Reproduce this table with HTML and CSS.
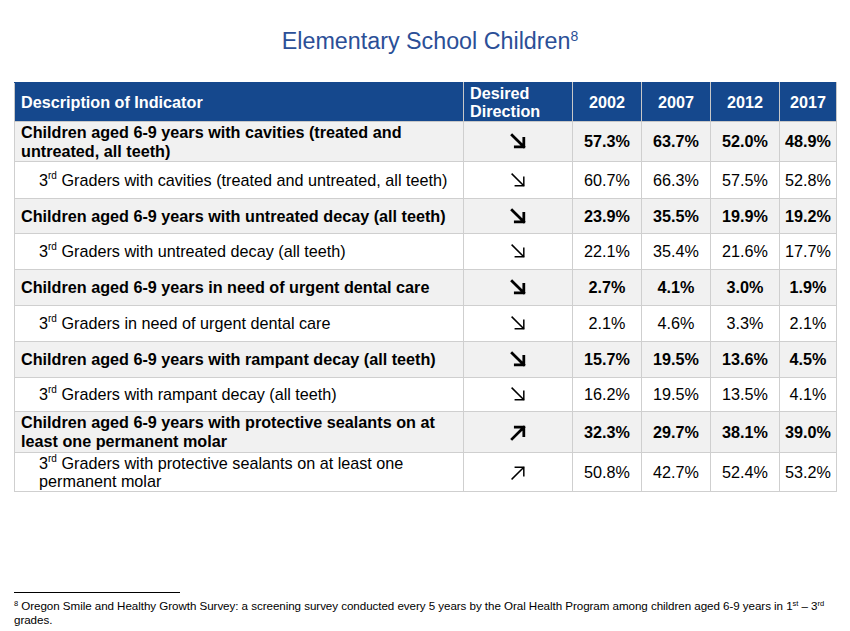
FILE: index.html
```html
<!DOCTYPE html>
<html>
<head>
<meta charset="utf-8">
<link rel="stylesheet" href="styles.css">
</head>
<body>
<h1 class="title">Elementary School Children<sup>8</sup></h1>
<table class="data">
  <colgroup>
    <col class="c-desc"><col class="c-dir"><col class="c-yr"><col class="c-yr"><col class="c-yr"><col class="c-yr-last">
  </colgroup>
  <thead>
    <tr>
      <th class="desc">Description of Indicator</th>
      <th class="dir">Desired<br>Direction</th>
      <th>2002</th><th>2007</th><th>2012</th><th>2017</th>
    </tr>
  </thead>
  <tbody>
    <tr class="main h40">
      <td class="desc">Children aged 6-9 years with cavities (treated and untreated, all teeth)</td>
      <td class="arrow"><svg class="ar" viewBox="0 0 16 16"><path d="M2 2 L13 13 M13 5 V13 H5"/></svg></td>
      <td>57.3%</td><td>63.7%</td><td>52.0%</td><td>48.9%</td>
    </tr>
    <tr class="sub h37">
      <td class="desc">3<sup>rd</sup> Graders with cavities (treated and untreated, all teeth)</td>
      <td class="arrow"><svg class="ar" viewBox="0 0 16 16"><path d="M2 2 L13 13 M13 5 V13 H5"/></svg></td>
      <td>60.7%</td><td>66.3%</td><td>57.5%</td><td>52.8%</td>
    </tr>
    <tr class="main h35">
      <td class="desc">Children aged 6-9 years with untreated decay (all teeth)</td>
      <td class="arrow"><svg class="ar" viewBox="0 0 16 16"><path d="M2 2 L13 13 M13 5 V13 H5"/></svg></td>
      <td>23.9%</td><td>35.5%</td><td>19.9%</td><td>19.2%</td>
    </tr>
    <tr class="sub h36">
      <td class="desc">3<sup>rd</sup> Graders with untreated decay (all teeth)</td>
      <td class="arrow"><svg class="ar" viewBox="0 0 16 16"><path d="M2 2 L13 13 M13 5 V13 H5"/></svg></td>
      <td>22.1%</td><td>35.4%</td><td>21.6%</td><td>17.7%</td>
    </tr>
    <tr class="main h36">
      <td class="desc">Children aged 6-9 years in need of urgent dental care</td>
      <td class="arrow"><svg class="ar" viewBox="0 0 16 16"><path d="M2 2 L13 13 M13 5 V13 H5"/></svg></td>
      <td>2.7%</td><td>4.1%</td><td>3.0%</td><td>1.9%</td>
    </tr>
    <tr class="sub h36">
      <td class="desc">3<sup>rd</sup> Graders in need of urgent dental care</td>
      <td class="arrow"><svg class="ar" viewBox="0 0 16 16"><path d="M2 2 L13 13 M13 5 V13 H5"/></svg></td>
      <td>2.1%</td><td>4.6%</td><td>3.3%</td><td>2.1%</td>
    </tr>
    <tr class="main h36">
      <td class="desc">Children aged 6-9 years with rampant decay (all teeth)</td>
      <td class="arrow"><svg class="ar" viewBox="0 0 16 16"><path d="M2 2 L13 13 M13 5 V13 H5"/></svg></td>
      <td>15.7%</td><td>19.5%</td><td>13.6%</td><td>4.5%</td>
    </tr>
    <tr class="sub h34">
      <td class="desc">3<sup>rd</sup> Graders with rampant decay (all teeth)</td>
      <td class="arrow"><svg class="ar" viewBox="0 0 16 16"><path d="M2 2 L13 13 M13 5 V13 H5"/></svg></td>
      <td>16.2%</td><td>19.5%</td><td>13.5%</td><td>4.1%</td>
    </tr>
    <tr class="main h41">
      <td class="desc">Children aged 6-9 years with protective sealants on at least one permanent molar</td>
      <td class="arrow"><svg class="ar" viewBox="0 0 16 16"><path d="M2 14 L13 3 M5 3 H13 V11"/></svg></td>
      <td>32.3%</td><td>29.7%</td><td>38.1%</td><td>39.0%</td>
    </tr>
    <tr class="sub h39">
      <td class="desc">3<sup>rd</sup> Graders with protective sealants on at least one permanent molar</td>
      <td class="arrow"><svg class="ar" viewBox="0 0 16 16"><path d="M2 14 L13 3 M5 3 H13 V11"/></svg></td>
      <td>50.8%</td><td>42.7%</td><td>52.4%</td><td>53.2%</td>
    </tr>
  </tbody>
</table>
<div class="footnote">
  <div class="rule"></div>
  <p><sup>8</sup> Oregon Smile and Healthy Growth Survey: a screening survey conducted every 5 years by the Oral Health Program among children aged 6-9 years in 1<sup>st</sup> – 3<sup>rd</sup> grades.</p>
</div>
</body>
</html>
```
FILE: styles.css
```css
html, body {
  margin: 0;
  padding: 0;
  background: #fff;
}
body {
  width: 850px;
  height: 631px;
  position: relative;
  font-family: "Liberation Sans", Arial, sans-serif;
  color: #000;
}
.title {
  margin: 0;
  padding-top: 28px;
  height: 53px;
  box-sizing: border-box;
  text-align: center;
  font-weight: normal;
  font-size: 23.3px;
  line-height: 26px;
  color: #2b4f97;
  padding-left: 10px;
}
.title sup {
  font-size: 14px;
  vertical-align: 8px;
  line-height: 0;
}
.data {
  margin: 29px 0 0 14px;
  border-collapse: collapse;
  width: 822px;
  table-layout: fixed;
  font-size: 16.2px;
}
.c-desc { width: 449px; }
.c-dir { width: 109px; }
.c-yr { width: 69px; }
.c-yr-last { width: 57px; }
.data th {
  background: #15488d;
  color: #fff;
  font-weight: bold;
  height: 38px;
  padding: 0;
  border: 1px solid #c8c8c8;
  border-top-color: #15488d;
  line-height: 18px;
  text-align: center;
}
.data th.desc { text-align: left; padding-left: 6px; }
.data th.dir { text-align: left; padding-left: 6px; }
.data td {
  border: 1px solid #cfcfcf;
  padding: 0;
  text-align: center;
  line-height: 19px;
}
.data td.desc { text-align: left; padding-left: 6px; padding-right: 4px; }
.main td { background: #f1f1f1; font-weight: bold; }
.sub td { background: #fff; }
.sub td.desc { padding-left: 24px; line-height: 18.5px; }
.data sup {
  font-size: 10px;
  line-height: 0;
  vertical-align: 7px;
}
.h34 { height: 34px; }
.h35 { height: 35px; }
.h36 { height: 36px; }
.h37 { height: 37px; }
.h39 { height: 39px; }
.h40 { height: 40px; }
.h41 { height: 41px; }
.ar {
  width: 17px;
  height: 17px;
  display: block;
  margin: 0 auto;
  fill: none;
  stroke: #000;
  stroke-width: 1.4;
  stroke-linecap: square;
}
.main .ar { stroke-width: 2.6; }
.footnote {
  position: absolute;
  left: 14px;
  top: 592px;
  width: 824px;
}
.rule {
  width: 166px;
  height: 0;
  border-top: 1px solid #000;
}
.footnote p {
  margin: 6px 0 0 0;
  font-family: "Liberation Sans", Arial, sans-serif;
  font-size: 11.6px;
  line-height: 14px;
  letter-spacing: -0.05px;
}
.footnote sup {
  font-size: 7.5px;
  line-height: 0;
  vertical-align: 4px;
}
```
